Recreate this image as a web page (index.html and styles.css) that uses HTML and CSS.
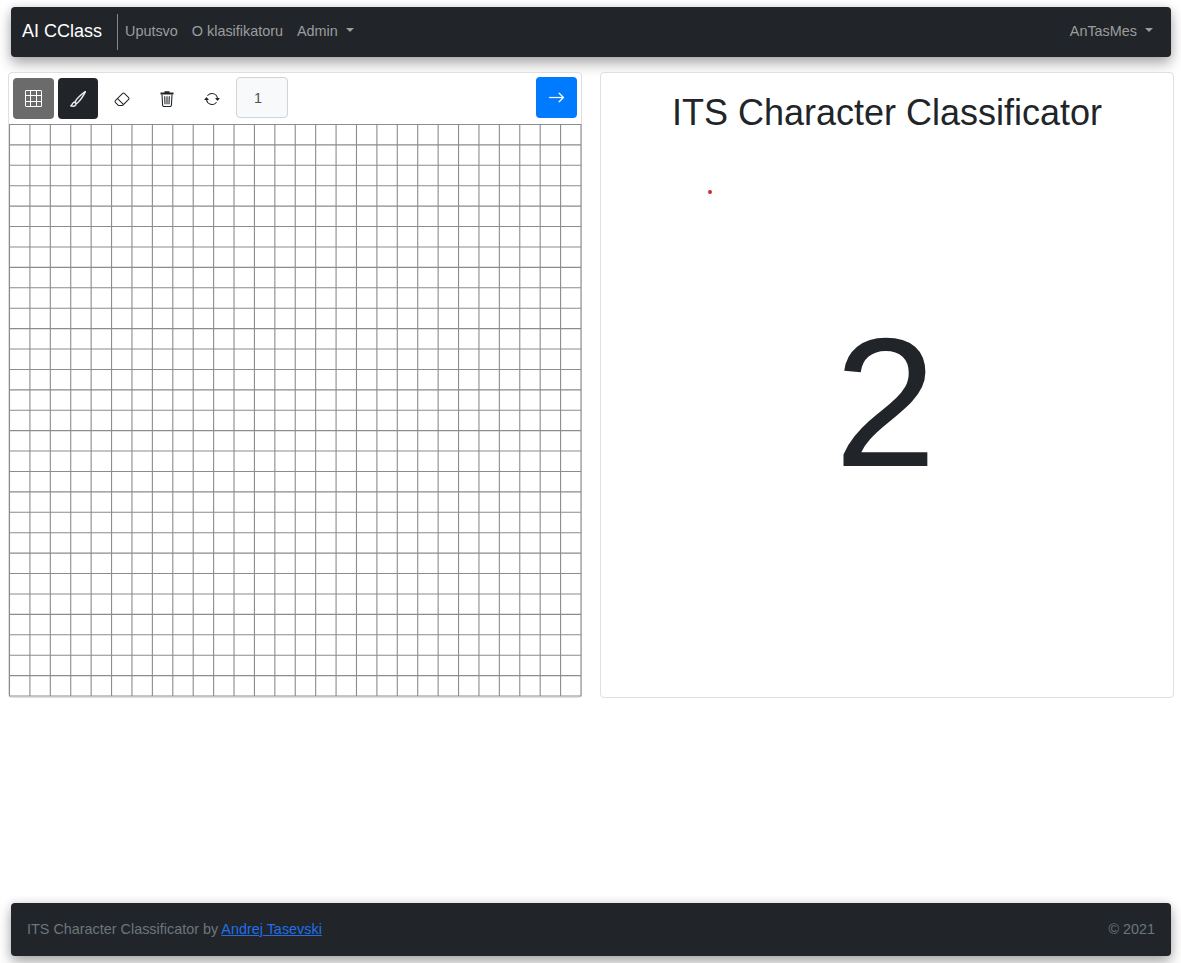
FILE: index.html
```html
<!DOCTYPE html>
<html lang="sr">
<head>
<meta charset="utf-8">
<title>AI CClass</title>
<link rel="stylesheet" href="styles.css">
</head>
<body>
<header class="navbar">
  <a class="brand">AI CClass</a>
  <nav class="links">
    <a>Uputsvo</a>
    <a>O klasifikatoru</a>
    <a class="dropdown">Admin</a>
  </nav>
  <a class="user dropdown">AnTasMes</a>
</header>

<main class="content">
  <section class="card board">
    <div class="toolbar">
      <button class="tool tool-grid" aria-label="Grid">
        <svg class="icon icon-grid" viewBox="0 0 17 17" fill="none" stroke="currentColor"><path d="M.5 1v15q0 .5.5.5h15q.5 0 .5-.5V1q0-.5-.5-.5H1q-.5 0-.5.5zM.5 5.5h16M.5 11.5h16M5.5.5v16M11.5.5v16"/></svg>
      </button>
      <button class="tool tool-brush" aria-label="Brush">
        <svg class="icon icon-brush" viewBox="0 0 16 16" fill="currentColor"><path d="M15.825.12a.5.5 0 0 1 .132.584c-1.53 3.43-4.743 8.17-7.095 10.64a6.067 6.067 0 0 1-2.373 1.534c-.018.227-.06.538-.16.868-.201.659-.667 1.479-1.708 1.74a8.118 8.118 0 0 1-3.078.132 3.659 3.659 0 0 1-.562-.135 1.382 1.382 0 0 1-.466-.247.714.714 0 0 1-.204-.288.622.622 0 0 1 .004-.443c.095-.245.316-.38.461-.452.394-.197.625-.453.867-.826.095-.144.184-.297.287-.472l.117-.198c.151-.255.326-.54.546-.848.528-.739 1.201-.925 1.746-.896.126.007.243.025.348.048.062-.172.142-.38.238-.608.261-.619.658-1.419 1.187-2.069 2.176-2.67 6.18-6.206 9.117-8.104a.5.5 0 0 1 .596.04zM4.705 11.912a1.23 1.23 0 0 0-.419-.1c-.246-.013-.573.05-.879.479-.197.275-.355.532-.5.777l-.105.177c-.106.181-.213.362-.32.528a3.39 3.39 0 0 1-.76.861c.69.112 1.736.111 2.657-.12.559-.139.843-.569.993-1.06a3.122 3.122 0 0 0 .126-.75l-.793-.792zm1.44.026c.12-.04.277-.1.458-.183a5.068 5.068 0 0 0 1.535-1.1c1.9-1.996 4.412-5.57 6.052-8.631-2.59 1.927-5.566 4.66-7.302 6.792-.442.543-.795 1.243-1.042 1.826-.121.288-.214.54-.275.72v.001l.575.575z"/></svg>
      </button>
      <button class="tool" aria-label="Eraser">
        <svg class="icon" viewBox="0 0 16 16" fill="currentColor"><path d="M8.086 2.207a2 2 0 0 1 2.828 0l3.879 3.879a2 2 0 0 1 0 2.828l-5.5 5.5A2 2 0 0 1 7.879 15H5.12a2 2 0 0 1-1.414-.586l-2.5-2.5a2 2 0 0 1 0-2.828l6.879-6.879zm2.121.707a1 1 0 0 0-1.414 0L4.16 7.547l5.293 5.293 4.633-4.633a1 1 0 0 0 0-1.414l-3.879-3.879zM8.746 13.547 3.453 8.254 1.914 9.793a1 1 0 0 0 0 1.414l2.5 2.5a1 1 0 0 0 .707.293H7.88a1 1 0 0 0 .707-.293l.16-.16z"/></svg>
      </button>
      <button class="tool" aria-label="Clear">
        <svg class="icon" viewBox="0 0 16 16" fill="none" stroke="currentColor"><path d="M5.5 1.2h5M1.5 2.6h13" stroke-width="2"/><path d="M3 3.5l.6 10.8q.1 1.2 1.2 1.2h6.4q1.1 0 1.2-1.2L13 3.5M5.7 5.2l.3 8M8 5.2v8M10.3 5.2l-.3 8" stroke-width="1.1"/></svg>
      </button>
      <button class="tool" aria-label="Repeat">
        <svg class="icon" viewBox="0 0 16 16" fill="currentColor"><path d="M11.534 7h3.932a.25.25 0 0 1 .192.41l-1.966 2.36a.25.25 0 0 1-.384 0l-1.966-2.36a.25.25 0 0 1 .192-.41zm-11 2h3.932a.25.25 0 0 0 .192-.41L2.692 6.23a.25.25 0 0 0-.384 0L.342 8.59A.25.25 0 0 0 .534 9z"/><path fill-rule="evenodd" d="M8 3c-1.552 0-2.94.707-3.857 1.818a.5.5 0 1 1-.771-.636A6.002 6.002 0 0 1 13.917 7H12.9A5.002 5.002 0 0 0 8 3zM3.1 9a5.002 5.002 0 0 0 8.757 2.182.5.5 0 1 1 .771.636A6.002 6.002 0 0 1 2.083 9H3.1z"/></svg>
      </button>
      <input class="brush-size" type="text" value="1" aria-label="Brush size">
      <button class="tool submit" aria-label="Submit">
        <svg class="icon icon-arrow" viewBox="0 0 16 16" fill="currentColor"><path fill-rule="evenodd" d="M1 8a.5.5 0 0 1 .5-.5h11.793l-3.147-3.146a.5.5 0 0 1 .708-.708l4 4a.5.5 0 0 1 0 .708l-4 4a.5.5 0 0 1-.708-.708L13.293 8.5H1.5A.5.5 0 0 1 1 8z"/></svg>
      </button>
    </div>
    <svg class="canvas" viewBox="0 0 573 573">
      <path class="cell-lines" id="cell-lines"/>
    </svg>
  </section>

  <section class="card result">
    <h1 class="title">ITS Character Classificator</h1>
    <span class="marker"></span>
    <div class="prediction">2</div>
  </section>
</main>

<footer class="footer">
  <span>ITS Character Classificator by <a class="author" href="#">Andrej Tasevski</a></span>
  <span>© 2021</span>
</footer>
<script src="grid.js"></script>
</body>
</html>
```
FILE: grid.js
```js
// Rules the drawing board into 28 × 28 cells.
const CELLS = 28;
const SIZE = 571.9;
let d = "";
for (let i = 0; i <= CELLS; i++) {
  const p = (0.5 + (i * (SIZE - 0.4)) / CELLS).toFixed(2);
  d += `M${p} 0V${SIZE + 0.6}M0 ${p}H${SIZE + 0.6}`;
}
document.getElementById("cell-lines").setAttribute("d", d);
```
FILE: styles.css
```css
* { box-sizing: border-box; }

body {
  margin: 0;
  height: 963px;
  padding: 7px 7px 7px 8px;
  display: flex;
  flex-direction: column;
  overflow: hidden;
  background: #fff;
  color: #212529;
  font: 14.4px/21.6px "Liberation Sans", Arial, sans-serif;
}

.navbar,
.footer {
  flex: none;
  display: flex;
  align-items: center;
  margin: 0 3px;
  border-radius: 4px;
  background: #212529;
  box-shadow: 0 7px 14px rgba(0, 0, 0, .3), 0 0 10px rgba(0, 0, 0, .12);
}

.navbar {
  height: 50px;
  padding: 0 18px 0 11px;
  color: #9b9d9f;
}

.brand {
  height: 36px;
  padding-right: 15px;
  border-right: 1px solid #85888a;
  color: #fff;
  font-size: 18px;
  line-height: 34px;
}

.links {
  display: flex;
  gap: 14px;
  margin-left: 7px;
  padding-bottom: 1px;
}

.user {
  margin-left: auto;
  padding-bottom: 1px;
}

.dropdown::after {
  content: "";
  display: inline-block;
  margin-left: 8px;
  vertical-align: 4px;
  border: 4px solid transparent;
  border-top-color: currentColor;
  border-bottom: 0;
}

.content {
  display: grid;
  grid-template-columns: 574px 574px;
  gap: 18px;
  margin-top: 15px;
}

.card {
  height: 626px;
  border: 1px solid #dfdfdf;
  border-radius: 4px;
  background: #fff;
}

.toolbar {
  display: flex;
  height: 51px;
  padding: 5px 4px 0;
  gap: 4px;
}

.tool {
  display: flex;
  align-items: center;
  justify-content: center;
  flex: none;
  width: 40.6px;
  height: 41px;
  padding: 0;
  border: 0;
  border-radius: 4px;
  background: none;
  color: #212529;
}

.tool-grid { background: #6b6b6b; color: #fff; }
.tool-brush { background: #212529; color: #fff; }

.icon {
  display: block;
  width: 16px;
  height: 16px;
}

.icon-grid { width: 17px; height: 17px; }
.icon-brush { stroke: currentColor; stroke-width: .4; }
.icon-arrow { width: 17px; height: 17px; stroke: currentColor; stroke-width: .2; }

.brush-size {
  width: 52px;
  height: 41px;
  margin-top: -1px;
  padding: 0 17px;
  border: 1px solid #ced4da;
  border-radius: 4px;
  background: #f8f9fa;
  color: #495057;
  font: inherit;
}

.submit {
  width: 41px;
  margin: -1px 0 0 auto;
  background: #007bff;
  color: #fff;
}

.canvas {
  display: block;
  width: 573px;
  height: 573px;
}

.cell-lines {
  fill: none;
  stroke: #8c8c8c;
  stroke-width: 1.1;
}

.result {
  position: relative;
  text-align: center;
}

.title {
  margin: 18px 0 0;
  font-size: 36px;
  font-weight: 400;
  line-height: 43px;
}

.marker {
  position: absolute;
  top: 117px;
  left: 107px;
  width: 4px;
  height: 4px;
  border-radius: 50%;
  background: #d92632;
}

.prediction {
  margin-top: 160px;
  padding-right: 3px;
  font-size: 184px;
  line-height: 216px;
}

.footer {
  justify-content: space-between;
  height: 53px;
  margin-top: auto;
  padding: 0 16px;
  color: #6c757d;
}

.author { color: #1f6feb; }
```
